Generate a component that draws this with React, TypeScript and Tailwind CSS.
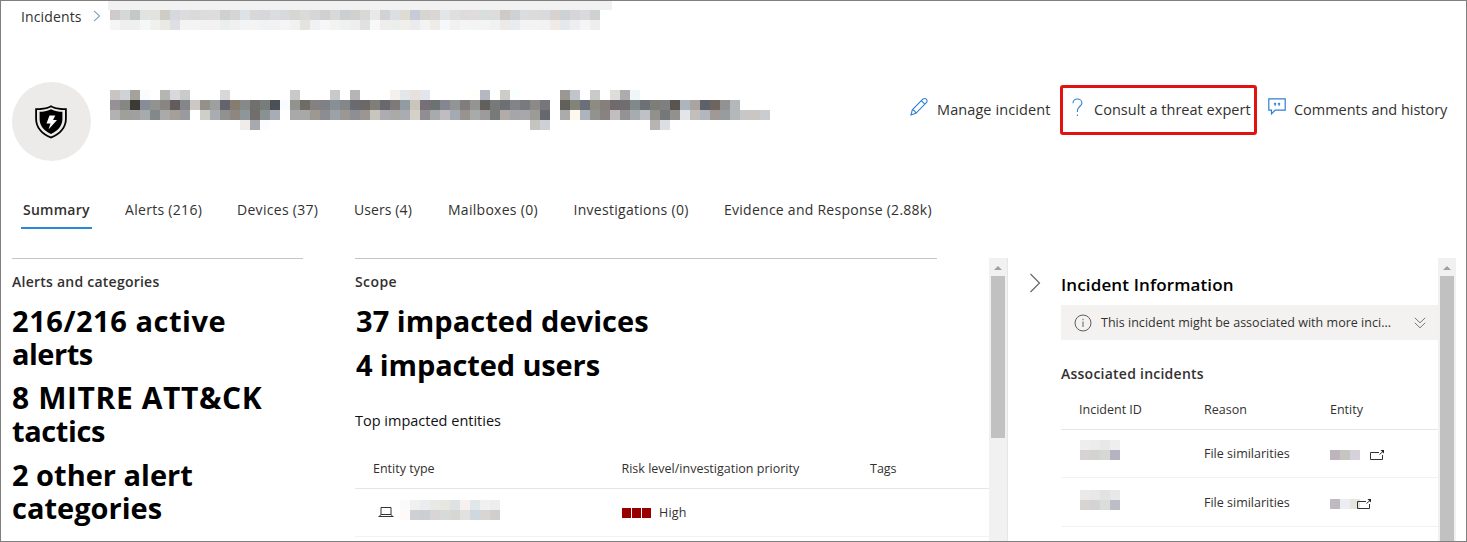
import React from "react";

const TITLE_ROWS: string[] = [
  "c8c5c3 cfd3d8 a5a29b f8fcff - b5b6b3 d8d9dc c9caca - - - d8d8db - - - - - - c9c9c9 - - - c9c9ca - b5b5b5 - - - f4f0ee e3e7ea e6e1de e2e5ec - - - - fffefa b5b8c0 - cfcbc9 f9feff - - - - 9b9793 c0c4cb - c9caca - dfddd9 adabad eef6fa",
  "969196 858880 3c3a35 868d98 929391 878683 625d5c 84868c cdc8c5 94918b 9da09f 64646f 857d70 858987 72706c 777d7a 4b5056 f8fcff 92938f 6e6c64 858180 7f8184 869096 858687 696b70 6c6865 807e76 69696d 7f7a7a 919ba1 cac5ba 767076 6c7172 84878f 929593 817c7d 949593 62605f 787a7a 6d7072 838488 787a80 8d8986 75777a - 62605b 828479 697079 8e8c82 86807c 706a6e 6f6d6e 81898b 6b7175 7e7e79 7d807f 595450 acb4bd aaa49f 5e6169 6c6560 919291 b4b8bb",
  "b4b1b5 9fa09a a0a0a0 a8abab 838888 abaaaa a59f9c 9a9b9f - cfcec9 a9adb2 929191 8d8681 8f9699 726e6c 899192 a7acb7 - a9a9a9 a8a8a7 9d9992 8b8d93 9ca2a7 9b9893 8d8f95 9b9693 c6c5be adadb1 abaaa8 a9adb2 d5d1c8 918d92 a8abac bfbdc1 a3aab4 98938f a9abab 9d9c9b 787a79 b1aca9 a5a5aa a8a7ab 9c9c96 66686d - aaacac fdf7ed aeb3be 929291 888380 c2bec0 939295 a7acb1 bec2c5 91918c 747879 92918f e4e5e9 c2bebc b3b7bd a19996 999c9f b3b8bb c7c7c8 cac6c4 c9ccd0",
  "- - - - - - - - - - - - - f0ece9 a8a9af fafcff - - - - - - - - - - - - - - - - - - - - - - - - - - c5c4bf cdd0d5 - - - - - - - - - - b8b4b2 dbdee2",
];

const CRUMB_ROWS: string[] = [
  "cfcbcd d5d8d6 c3c9c5 e2e3e0 e2e2e0 cfccc6 d6d8df dcdcdc d9dadb dcdcda dedddb cdd1d0 d5d6d4 dde2e7 d9d8d6 d6d7da dadcdf d7d9da d6d7d5 dbdad6 d5d7d7 cfd0d2 d9d9d7 cbcfd1 d0d0d0 d8d8d5 e8e9e7 d2d2d5 dcdfe2 dfdad2 c6cbd7 d5d5d2 d9d6d5 e2e6e9 dfdfe2 dcdcdc e0dcdc d8dedd dcdcda cecac8 cfd2d5 dcdcdc dbdbdb dad9dc d7d1cf cdd2d6 d6d6d9 dadadc cdd1d2",
  "f5f5f5 efefef eeefee f5f8f8 f0f0ef ebe9e6 dedfe3 f4f4f4 f4f4f4 f2f2f2 f1f2f1 eceeed f0f0f0 f3f4f5 f4f4f4 f1f2f4 f2f2f3 f5f5f5 f1f1f0 e4e3df f0f1f5 f7f7f7 f3f3f2 eff0f0 eeeeee dfe2e1 f6f8fa f0eeed eceeec f0efeb ebebed f2f4f3 efece8 f6f8fb f1f1ef f5f5f5 f5f4f4 f4f4f4 eff2f1 ede9e6 e9ebf0 f3f3f4 f3f3f4 f2f2f4 f0e9e5 e5e8ec edeef1 f5f5f5 eeeeee",
];

function Mosaic({ rows, cell = 10 }: { rows: string[]; cell?: number }) {
  const grid = rows.map((r) => r.split(" "));
  const w = Math.max(...grid.map((r) => r.length)) * cell;
  const h = grid.length * cell;
  return (
    <svg width={w} height={h} shapeRendering="crispEdges" className="block shrink-0">
      {grid.map((r, y) =>
        r.map((c, x) =>
          c === "-" ? null : (
            <rect key={`${x}-${y}`} x={x * cell} y={y * cell} width={cell} height={cell} fill={`#${c}`} />
          ),
        ),
      )}
    </svg>
  );
}

function Shield() {
  return (
    <svg width="34" height="36" viewBox="0 0 34 36" className="mr-px block">
      <path d="M17 1.200C12.500 4 6 4.200 1.200 4.200V15c0 9 6.500 16 15.800 19.600C26.300 31 32.800 24 32.800 15V4.200C28 4.200 21.500 4 17 1.200z" fill="#000" />
      <path d="M17 3.300C12.300 5.800 7 6 3 6.100V15c0 8 5.500 14.200 14 17.600C25.500 29.200 31 23 31 15V6.100C27 6 21.700 5.800 17 3.300z" fill="#ecebea" />
      <path d="M17 5.200C13 7.200 9 7.700 5.600 7.800V15c0 6.800 4.600 12 11.400 15 6.800-3 11.400-8.200 11.400-15V7.800C25 7.700 21 7.200 17 5.200z" fill="#000" />
      <path d="M15.500 11.500h5.800l-2.300 4.600h4L14.500 25.500l2-6h-4z" fill="#fff" />
    </svg>
  );
}

function Pencil() {
  return (
    <svg width="18" height="19" viewBox="0 0 18 19" fill="none" stroke="#2f7fd3" strokeWidth="1.100" className="block">
      <path d="M1 18l1.300-5.200L12.800 2.200a2.400 2.400 0 0 1 3.500 0 2.400 2.400 0 0 1 0 3.500L5.900 16.300z" />
      <path d="M11.300 3.700l3.500 3.500M2.300 12.800c1.900.3 3.200 1.600 3.600 3.500" />
    </svg>
  );
}

function Question() {
  return (
    <svg width="11" height="19" viewBox="0 0 11 19" fill="none" stroke="#2f7fd3" strokeWidth="1.100" className="block">
      <path d="M1 5.200C1 2.500 2.900 1 5.400 1S9.900 2.500 9.900 4.900C9.900 8.300 5.400 8.700 5.400 12.500v1.600" />
      <path d="M5.400 16.500v1.500" />
    </svg>
  );
}

function Comment() {
  return (
    <svg width="18" height="17" viewBox="0 0 18 17" fill="none" stroke="#2f7fd3" strokeWidth="1.200" className="block">
      <path d="M.8.800h16.400v11.400H7.200L3.500 15.900v-3.700H.8z" />
      <path d="M6.200 5h1.600v1.600L6.900 8.100 7 6.600h-.8zM10.200 5h1.600v1.600l-.9 1.500.1-1.500h-.8z" fill="#1f6fc8" strokeWidth=".4" />
    </svg>
  );
}

function Laptop() {
  return (
    <svg width="16" height="12" viewBox="0 0 16 12" fill="none" stroke="#333" className="block">
      <path d="M3 8.500v-7h10v7M1.500 10.500l1.300-2h10.400l1.300 2M.5 10.500h15" />
    </svg>
  );
}

function External() {
  return (
    <svg width="15" height="12" viewBox="0 0 15 12" fill="none" stroke="#333" className="block">
      <path d="M9 2.500H.5v7h12V5M9.500 4.500l4-3.500" />
      <path d="M10.500 0H14v3.500z" fill="#222" stroke="none" />
    </svg>
  );
}

function ScrollArrow() {
  return (
    <svg width="8" height="4" viewBox="0 0 8 4" className="block">
      <path d="M0 4L4 0l4 4z" fill="#a0a0a0" />
    </svg>
  );
}

const TABS = [
  { label: "Alerts (216)", cls: "w-[112px] tracking-[0.300px]" },
  { label: "Devices (37)", cls: "w-[117px] tracking-[0.300px]" },
  { label: "Users (4)", cls: "w-[94px] tracking-[0.100px]" },
  { label: "Mailboxes (0)", cls: "w-[125.500px] tracking-[0.280px]" },
  { label: "Investigations (0)", cls: "w-[150.500px] tracking-[0.280px]" },
  { label: "Evidence and Response (2.88k)", cls: "w-[220px] tracking-[0.260px]" },
];

const ASSOCIATED = [
  {
    id: ["f0edee ececec e8e8e6 edefef", "d8d3d3 d3d3d1 d5d8d4 b5b3bf"],
    entity: ["bcb5bd c5c6c1 d6d1da"],
    row: "h-[48px] leading-[48px]",
    pad: "mt-[10px]",
    entityCls: "mt-[20px] gap-[10px]",
  },
  {
    id: ["ebeae9 e8e8e8 e2e2e0 e7e8ea", "d8d4d4 d3d3d3 dbddda bebcc5"],
    entity: ["bfbac2 ecedf0 e4e5df"],
    row: "h-[49px] leading-[50px]",
    pad: "mt-[12px]",
    entityCls: "mt-[21px] -space-x-[3px]",
  },
];

export default function App() {
  return (
    <div className="relative flex h-[542px] w-[1467px] flex-col overflow-hidden border border-[#7f7f7f] bg-white font-['Open_Sans',sans-serif] text-[#323130]">
      <div className="absolute -top-px left-[107px] h-[10px] w-[504px] bg-[#f1f1f1]" />

      <nav className="flex h-[30px] items-start pl-[20px]">
        <span className="mt-[6px] w-[72px] text-[14px] leading-5 tracking-[0.130px]">Incidents</span>
        <svg width="8" height="12" viewBox="0 0 8 12" fill="none" stroke="#7fa0bd" strokeWidth="1.100" className="mt-[9px] block">
          <path d="M1 .800L6.500 6 1 11.200" />
        </svg>
        <div className="mt-[9px] ml-[9px]"><Mosaic rows={CRUMB_ROWS} /></div>
      </nav>

      <header className="mt-[51px] flex h-[79px] items-start pl-[11px]">
        <div className="flex size-[79px] items-center justify-center rounded-full bg-[#ecebea]"><Shield /></div>
        <div className="mt-[8px] ml-[19px] w-[789px]"><Mosaic rows={TITLE_ROWS} /></div>
        <div className="mt-[3px] flex h-[50px] text-[14.500px] leading-[50px] tracking-[0.030px] whitespace-nowrap">
          <div className="flex w-[161px] pl-[11px]">
            <div className="mt-[12px] w-[27px]"><Pencil /></div>
            <span className="tracking-[0.090px]">Manage incident</span>
          </div>
          <div className="flex w-[197px] rounded-[3px] border-3 border-[#e3120f] pl-[9px] leading-[44px]">
            <div className="mt-[10px] w-[22px]"><Question /></div>
            <span>Consult a threat expert</span>
          </div>
          <div className="flex pl-[11px]">
            <div className="mt-[13px] w-[26px]"><Comment /></div>
            <span className="-tracking-[0.020px]">Comments and history</span>
          </div>
        </div>
      </header>

      <div className="mt-[36px] flex h-[32px] pl-[20px] text-[14px] leading-[26px] whitespace-nowrap">
        <div className="mr-[33px] w-[71px] border-b-2 border-[#2b88d8] pl-[2px] text-[14px] font-semibold tracking-[0.250px]">Summary</div>
        {TABS.map((t) => (
          <div key={t.label} className={t.cls}>{t.label}</div>
        ))}
      </div>

      <main className="mt-[29px] flex h-[283px] overflow-hidden">
        <section className="ml-[11px] w-[291px] shrink-0">
          <div className="border-t border-[#c8c6c4]" />
          <h2 className="mt-[13px] text-[14px] leading-5 font-semibold tracking-[0.240px]">Alerts and categories</h2>
          <div className="mt-[12px] flex flex-col gap-[11px] text-[29px] leading-[33px] font-bold text-black">
            <p className="-tracking-[0.500px]"><span className="tracking-[0.550px]">216/216 active</span><br />alerts</p>
            <p className="-tracking-[0.400px]"><span className="text-[30px] leading-[32px] tracking-[0.600px]">8 MITRE ATT&amp;CK</span><br />tactics</p>
            <p>2 other alert<br />categories</p>
          </div>
        </section>

        <section className="ml-[52px] w-[634px] shrink-0 overflow-hidden whitespace-nowrap">
          <div className="w-[582px] border-t border-[#c8c6c4]" />
          <h2 className="mt-[13px] text-[14px] leading-5 font-semibold tracking-[0.400px]">Scope</h2>
          <div className="mt-[12px] flex flex-col gap-[11px] pl-px text-[29px] leading-[33px] font-bold text-black">
            <p className="tracking-[0.050px]">37 impacted devices</p>
            <p className="-tracking-[0.130px]">4 impacted users</p>
          </div>
          <h3 className="mt-[30px] text-[14.500px] leading-5 text-[#111]">Top impacted entities</h3>
          <div className="mt-[18px] flex h-[40px] border-b border-[#e6e6e6] pl-[18px] text-[12.500px] leading-[39px]">
            <span className="w-[248.500px]">Entity type</span>
            <span className="w-[248.500px]">Risk level/investigation priority</span>
            <span>Tags</span>
          </div>
          <div className="flex h-[48px] border-b border-[#f3f2f1] pl-[23px] text-[12.500px] leading-[47px]">
            <div className="mt-[17px]"><Laptop /></div>
            <div className="mt-[11px] ml-[6px]">
              <Mosaic rows={["fafafa f0f1ef ebecee e8e8e7 e7e7e1 dde2e2 f6f1ef e1e6eb f0f0f0 ededed", "fffaf7 cfd0d3 cbced2 dad5d5 d7dad8 d5d7d3 e2e1df cfd7df d7d6d2 d0cfce"]} />
            </div>
            <div className="mt-[19px] ml-[122px] flex gap-px">
              <div className="h-[10px] w-[9px] bg-[#980000]" />
              <div className="h-[10px] w-[9px] bg-[#980000]" />
              <div className="h-[10px] w-[9px] bg-[#980000]" />
            </div>
            <span className="ml-[8px] tracking-[0.200px]">High</span>
          </div>
        </section>

        <div className="flex w-[19px] shrink-0 flex-col items-center border-r border-[#e6e6e6] bg-[#f1f1f1]">
          <div className="flex h-[18px] items-center pt-px"><ScrollArrow /></div>
          <div className="h-[162px] w-[14px] bg-[#c1c1c1]" />
        </div>

        <aside className="flex w-[430px] shrink-0 overflow-hidden pl-[21px] whitespace-nowrap">
          <svg width="13" height="20" viewBox="0 0 13 20" fill="none" stroke="#666" strokeWidth="1.200" className="mt-[15px] block shrink-0">
            <path d="M1.500 1l9 9-9 9" />
          </svg>
          <div className="ml-[19px] w-[377px] shrink-0">
            <h2 className="mt-[15px] text-[17px] leading-6 font-semibold tracking-[0.130px] text-black">Incident Information</h2>
            <div className="mt-[8px] flex h-[35px] items-center bg-[#f3f2f1] pl-[13px] text-[12.500px]">
              <svg width="18" height="18" viewBox="0 0 18 18" fill="none" stroke="#605e5c" className="block shrink-0">
                <circle cx="9" cy="9" r="8" />
                <path d="M9 7.500V13M9 4.800v1.400" />
              </svg>
              <span className="mt-[2px] ml-[9px] w-[313px] tracking-[0.020px]">This incident might be associated with more inci...</span>
              <svg width="12" height="12" viewBox="0 0 12 12" fill="none" stroke="#777" className="block shrink-0">
                <path d="M.8.800L6 5.800 11.200.800M.8 5.800L6 10.800l5.200-5" />
              </svg>
            </div>
            <h3 className="mt-[24px] text-[14px] leading-5 font-semibold tracking-[0.240px]">Associated incidents</h3>
            <div className="mt-[6px] flex h-[40px] border-b border-[#e6e6e6] pl-[18px] text-[12.500px] leading-[40px]">
              <span className="w-[125px]">Incident ID</span>
              <span className="w-[126px]">Reason</span>
              <span>Entity</span>
            </div>
            {ASSOCIATED.map((row, i) => (
              <div key={i} className={`flex border-b border-[#f3f2f1] pl-[19px] text-[12.500px] ${row.row}`}>
                <div className={`w-[124px] ${row.pad}`}><Mosaic rows={row.id} /></div>
                <span className="w-[126px]">File similarities</span>
                <div className={`flex h-[12px] items-start ${row.entityCls}`}>
                  <Mosaic rows={row.entity} />
                  <External />
                </div>
              </div>
            ))}
          </div>
        </aside>

        <div className="flex w-[18px] shrink-0 flex-col items-center bg-[#f1f1f1]">
          <div className="flex h-[18px] items-center pt-px"><ScrollArrow /></div>
          <div className="h-[265px] w-[14px] bg-[#c1c1c1]" />
        </div>
      </main>
    </div>
  );
}
